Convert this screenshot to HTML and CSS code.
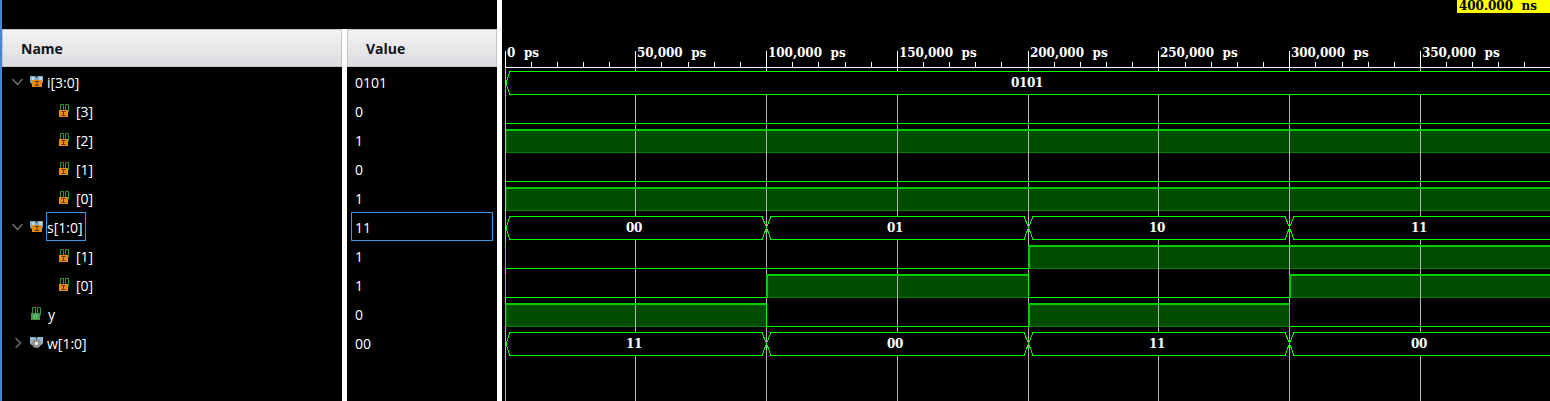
FILE: index.html
```html
<!DOCTYPE html>
<html lang="en">
<head>
<meta charset="utf-8">
<title>Waveform</title>
<link rel="stylesheet" href="styles.css">
</head>
<body>
<svg class="defs" width="0" height="0" aria-hidden="true">
  <defs>
    <g id="ico-bus-in">
      <path d="M0 0h5.500l1 2 1-2H13v6l-1.500 2h-10L0 6z" fill="#7fa9c0"/>
      <path d="M1.500 1h3v3h-3zM9 1h3v3H9z" fill="#bcd8e6"/>
      <rect x="2" y="4" width="10" height="7" fill="#e98a17"/>
      <path d="M5 5.500h4M7 5.500v4M5 9.500h4" stroke="#5a3a10" fill="none"/>
    </g>
    <g id="ico-bit-in">
      <path d="M1.500 7V.5h3V7M6.500 6V.5h3V8.500" stroke="#1f9a35" fill="none"/>
      <rect x="0" y="6" width="9" height="7" fill="#e98a17"/>
      <path d="M2.500 7.500h4M4.500 7.500v4M2.500 11.500h4" stroke="#5a3a10" fill="none"/>
    </g>
    <g id="ico-bit-out">
      <path d="M1.500 7V.5h3V7M6.500 6V.5h3V8.500" stroke="#1f9a35" fill="none"/>
      <rect x="0" y="6" width="9" height="7" fill="#3c9a46"/>
      <rect x="3" y="8" width="3" height="3" fill="none" stroke="#7cc488"/>
    </g>
    <g id="ico-bus-out">
      <path d="M0 0h5.500l1 2 1-2H13v6l-1.500 2h-10L0 6z" fill="#8db8cf"/>
      <circle cx="6.500" cy="6.500" r="4.500" fill="#8f8f8f"/>
      <circle cx="6.500" cy="6.500" r="1.800" fill="#e4e4e4"/>
    </g>
  </defs>
</svg>
<main class="app">
  <div class="rail"></div>

  <section class="pane names">
    <div class="head"><span class="head-label">Name</span></div>
    <ul class="rows">
      <li class="row lvl0"><svg class="chev" viewBox="0 0 11 11"><path d="M.5 3l5 5.500 5-5.500"/></svg><svg class="ico"><use href="#ico-bus-in"/></svg><span class="lbl">i[3:0]</span></li>
      <li class="row lvl1"><svg class="ico"><use href="#ico-bit-in"/></svg><span class="lbl">[3]</span></li>
      <li class="row lvl1"><svg class="ico"><use href="#ico-bit-in"/></svg><span class="lbl">[2]</span></li>
      <li class="row lvl1"><svg class="ico"><use href="#ico-bit-in"/></svg><span class="lbl">[1]</span></li>
      <li class="row lvl1"><svg class="ico"><use href="#ico-bit-in"/></svg><span class="lbl">[0]</span></li>
      <li class="row lvl0"><svg class="chev" viewBox="0 0 11 11"><path d="M.5 3l5 5.500 5-5.500"/></svg><svg class="ico"><use href="#ico-bus-in"/></svg><span class="lbl sel">s[1:0]</span></li>
      <li class="row lvl1"><svg class="ico"><use href="#ico-bit-in"/></svg><span class="lbl">[1]</span></li>
      <li class="row lvl1"><svg class="ico"><use href="#ico-bit-in"/></svg><span class="lbl">[0]</span></li>
      <li class="row lvl0 nochev"><svg class="ico"><use href="#ico-bit-out"/></svg><span class="lbl">y</span></li>
      <li class="row lvl0"><svg class="chev" viewBox="0 0 11 11"><path d="M3.500 1l5 5-5 5"/></svg><svg class="ico"><use href="#ico-bus-out"/></svg><span class="lbl">w[1:0]</span></li>
    </ul>
  </section>

  <div class="gutter"></div>

  <section class="pane values">
    <div class="head"><span class="head-label">Value</span></div>
    <ul class="rows">
      <li class="row val">0101</li>
      <li class="row val">0</li>
      <li class="row val">1</li>
      <li class="row val">0</li>
      <li class="row val">1</li>
      <li class="row val"><span class="val-sel">11</span></li>
      <li class="row val">1</li>
      <li class="row val">1</li>
      <li class="row val">0</li>
      <li class="row val">00</li>
    </ul>
  </section>

  <div class="divider"></div>

  <section class="wave">
    <svg class="plot" viewBox="502 0 1048 401" width="1048" height="401">
      <!-- high-level fills -->
      <g class="fill">
        <rect x="506" y="129" width="1044" height="24"/>
        <rect x="506" y="187" width="1044" height="24"/>
        <rect x="1029" y="245" width="521" height="24"/>
        <rect x="767" y="274" width="261" height="24"/>
        <rect x="1290" y="274" width="260" height="24"/>
        <rect x="506" y="303" width="260" height="24"/>
        <rect x="1029" y="303" width="260" height="24"/>
      </g>
      <g class="dim">
        <path d="M506 152.500H1550M506 210.500H1550M1029 268.500H1550M767 297.500H1028M1290 297.500H1550M506 326.500H766M1029 326.500H1289"/>
        <path d="M506.500 129V153M506.500 187V211M506.500 303V327"/>
      </g>
      <!-- grid -->
      <path class="grid" d="M505.500 67V401M635.500 67V401M766.500 67V401M897.500 67V401M1028.500 67V401M1158.500 67V401M1289.500 67V401M1420.500 67V401"/>
      <!-- ruler -->
      <path class="ruler" d="M505 67.500H1550M505.500 51V67M635.500 51V67M766.500 51V67M897.500 51V67M1028.500 51V67M1158.500 51V67M1289.500 51V67M1420.500 51V67M531.500 62V67M557.500 62V67M583.500 62V67M609.500 62V67M661.500 62V67M688.500 62V67M714.500 62V67M740.500 62V67M792.500 62V67M818.500 62V67M845.500 62V67M871.500 62V67M923.500 62V67M949.500 62V67M975.500 62V67M1001.500 62V67M1054.500 62V67M1080.500 62V67M1106.500 62V67M1132.500 62V67M1185.500 62V67M1211.500 62V67M1237.500 62V67M1263.500 62V67M1315.500 62V67M1342.500 62V67M1368.500 62V67M1394.500 62V67M1446.500 62V67M1472.500 62V67M1498.500 62V67M1524.500 62V67"/>
      <g class="rule-text">
        <text x="507" y="57">0 ps</text>
        <text x="637" y="57">50,000 ps</text>
        <text x="768" y="57">100,000 ps</text>
        <text x="899" y="57">150,000 ps</text>
        <text x="1030" y="57">200,000 ps</text>
        <text x="1160" y="57">250,000 ps</text>
        <text x="1291" y="57">300,000 ps</text>
        <text x="1422" y="57">350,000 ps</text>
      </g>
      <!-- buses -->
      <g class="bus">
        <path d="M1550 71.500H510L506 83L510 94.500H1550"/>
        <path d="M1550 216.500H1294L1289.500 227.500L1294 239.500H1550ZM1285 216.500H1033L1028.500 227.500L1033 239.500H1285L1289.500 227.500ZM1024 216.500H771L766.500 227.500L771 239.500H1024L1028.500 227.500ZM762 216.500H510L506 228L510 239.500H762L766.500 227.500Z"/>
        <path d="M1550 332.500H1294L1289.500 343.500L1294 355.500H1550ZM1285 332.500H1033L1028.500 343.500L1033 355.500H1285L1289.500 343.500ZM1024 332.500H771L766.500 343.500L771 355.500H1024L1028.500 343.500ZM762 332.500H510L506 344L510 355.500H762L766.500 343.500Z"/>
      </g>
      <!-- bit traces -->
      <g class="trace">
        <path d="M506 123.500H1550M506 181.500H1550"/>
        <path d="M505.500 245V268.500H1028M505.500 274V297.500H766M1028 297.500H1289"/>
        <path d="M766 326.500H1028M1289 326.500H1550"/>
        <path d="M505.500 303V326"/>
      </g>
      <g class="top">
        <path d="M506 130H1550M506 188H1550M1028 246H1550M766 275H1028M1289 275H1550M506 304H766M1028 304H1289"/>
        <path d="M767 274V298M1029 245V269M1290 274V298M1029 303V327"/>
      </g>
      <g class="edge">
        <path d="M766.500 303V327M1289.500 303V327M1028.500 274V298"/>
      </g>
      <g class="bus-text">
        <text x="1027" y="87">0101</text>
        <text x="634" y="232">00</text>
        <text x="895" y="232">01</text>
        <text x="1157" y="232">10</text>
        <text x="1419" y="232">11</text>
        <text x="634" y="348">11</text>
        <text x="895" y="348">00</text>
        <text x="1157" y="348">11</text>
        <text x="1419" y="348">00</text>
      </g>
      <rect class="cursor-box" x="1457" y="0" width="93" height="13"/>
      <text class="cursor-text" x="1459" y="10">400.000 ns</text>
    </svg>
  </section>
</main>
</body>
</html>
```
FILE: styles.css
```css
html, body { margin: 0; padding: 0; background: #000; overflow: hidden; }
.defs { position: absolute; }
.app { display: flex; width: 1550px; height: 401px; background: #000; color: #fff; font-family: "Open Sans", "Noto Sans", "Liberation Sans", sans-serif; font-size: 14px; }
.rail { width: 2px; background: #4a86cf; flex: none; }
.pane { flex: none; padding-top: 29px; box-sizing: border-box; }
.names { width: 340px; }
.values { width: 150px; }
.gutter { width: 5px; flex: none; margin-top: 29px; background: #fff; }
.divider { width: 5px; flex: none; background: #fff; }
.head { height: 38px; box-sizing: border-box; display: flex; align-items: center; background: linear-gradient(#f3f3f3, #dcdce1); border: 1px solid #c4c4c4; color: #10131a; font-weight: 700; font-size: 14px; }
.names .head { padding-left: 18px; }
.values .head { padding-left: 18px; }
.head-label { display: block; margin-top: 1px; }
.rows { list-style: none; margin: 0; padding: 0; }
.row { height: 29px; display: flex; align-items: flex-start; line-height: 31px; }
.lvl0 { padding-left: 10px; }
.lvl1 { padding-left: 57px; }
.nochev { padding-left: 29px; }
.chev { width: 11px; height: 11px; flex: none; margin-top: 9px; margin-right: 7px; fill: none; stroke: #757575; stroke-width: 1.3; }
.ico { width: 14px; height: 14px; flex: none; margin-top: 9px; margin-right: 3px; overflow: visible; }
.lvl1 .ico { margin-top: 8px; }
.nochev .ico { margin-top: 8px; }
.lbl { display: block; }
.sel { box-sizing: border-box; width: 40px; height: 29px; margin-left: -1px; line-height: 29px; border: 1px solid #3a96dd; }
.val { padding-left: 8px; }
.val-sel { display: block; box-sizing: border-box; width: 142px; height: 29px; margin-left: -4px; padding-left: 3px; line-height: 29px; border: 1px solid #3a96dd; }
.wave { flex: none; width: 1048px; height: 401px; }
.plot { display: block; shape-rendering: crispEdges; }
.fill rect { fill: #004d00; }
.dim path { fill: none; stroke: #008000; stroke-width: 1; }
.grid { fill: none; stroke: #b4b4b4; stroke-width: 1; }
.ruler { fill: none; stroke: #fff; stroke-width: 1; }
.rule-text text, .bus-text text, .cursor-text { font-family: "DejaVu Serif", "Liberation Serif", serif; font-weight: 700; font-size: 12px; letter-spacing: -0.05px; word-spacing: 4.5px; }
.rule-text text { fill: #fff; }
.bus-text text { fill: #fff; text-anchor: middle; letter-spacing: -0.3px; }
.bus path { fill: #000; stroke: #00ff00; stroke-width: 1; }
.trace path { fill: none; stroke: #00ff00; stroke-width: 1; }
.top path { fill: none; stroke: #00cc00; stroke-width: 2; }
.edge path { fill: none; stroke: #00ff00; stroke-width: 1; }
.cursor-box { fill: #ffff00; }
.cursor-text { fill: #000; }
```
